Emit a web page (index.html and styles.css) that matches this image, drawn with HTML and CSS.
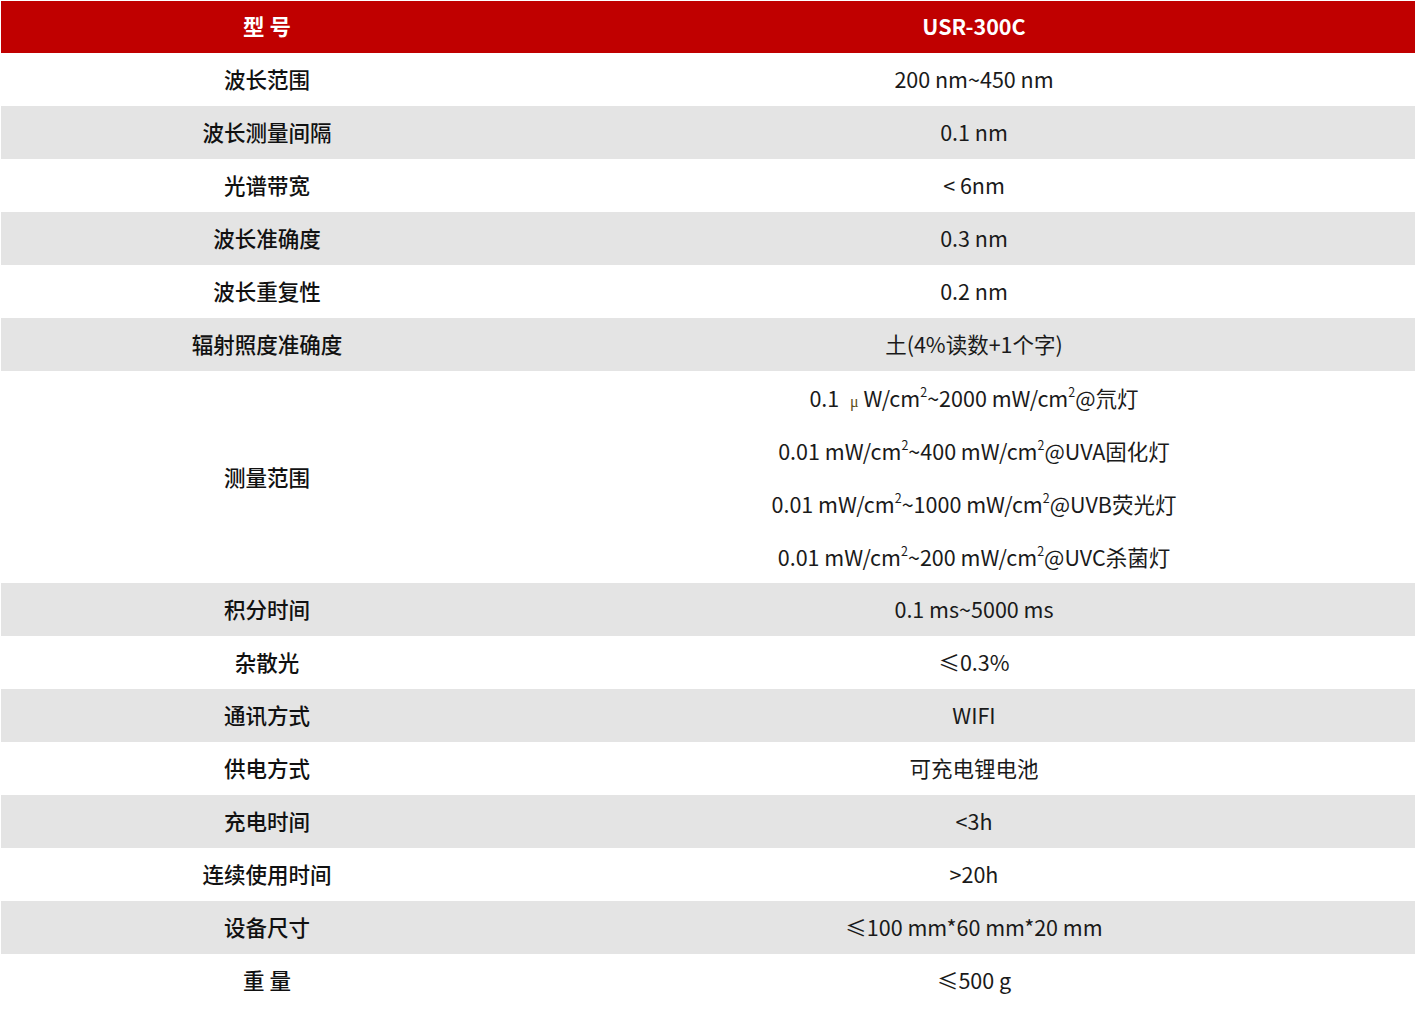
FILE: index.html
```html
<!DOCTYPE html>
<html lang="zh-CN">
<head>
<meta charset="utf-8">
<title>USR-300C</title>
<link rel="stylesheet" href="styles.css">
</head>
<body>
<table class="spec">
  <colgroup><col class="c-label"><col class="c-value"></colgroup>
  <thead>
    <tr class="head"><th>型&nbsp;号</th><th>USR-300C</th></tr>
  </thead>
  <tbody>
    <tr><td class="label">波长范围</td><td>200 nm~450 nm</td></tr>
    <tr class="alt"><td class="label">波长测量间隔</td><td>0.1 nm</td></tr>
    <tr><td class="label">光谱带宽</td><td>&lt; 6nm</td></tr>
    <tr class="alt"><td class="label">波长准确度</td><td>0.3 nm</td></tr>
    <tr><td class="label">波长重复性</td><td>0.2 nm</td></tr>
    <tr class="alt"><td class="label">辐射照度准确度</td><td>土(4%读数+1个字)</td></tr>
    <tr class="multi"><td class="label">测量范围</td><td>
      <div class="line">0.1 <span class="mu">μ</span> W/cm<sup>2</sup>~2000 mW/cm<sup>2</sup>@氘灯</div>
      <div class="line">0.01 mW/cm<sup>2</sup>~400 mW/cm<sup>2</sup>@UVA固化灯</div>
      <div class="line">0.01 mW/cm<sup>2</sup>~1000 mW/cm<sup>2</sup>@UVB荧光灯</div>
      <div class="line">0.01 mW/cm<sup>2</sup>~200 mW/cm<sup>2</sup>@UVC杀菌灯</div>
    </td></tr>
    <tr class="alt"><td class="label">积分时间</td><td>0.1 ms~5000 ms</td></tr>
    <tr><td class="label">杂散光</td><td>≤0.3%</td></tr>
    <tr class="alt"><td class="label">通讯方式</td><td>WIFI</td></tr>
    <tr><td class="label">供电方式</td><td>可充电锂电池</td></tr>
    <tr class="alt"><td class="label">充电时间</td><td>&lt;3h</td></tr>
    <tr><td class="label">连续使用时间</td><td>&gt;20h</td></tr>
    <tr class="alt"><td class="label">设备尺寸</td><td>≤100 mm*60 mm*20 mm</td></tr>
    <tr><td class="label">重&nbsp;量</td><td>≤500 g</td></tr>
  </tbody>
</table>
</body>
</html>
```

FILE: styles.css
```css
html, body {
  margin: 0;
  padding: 0;
  background: #ffffff;
}
body {
  padding: 1px;
  font-family: "Noto Sans CJK SC", "Noto Sans", sans-serif;
  color: #111111;
}
.spec {
  width: 1414px;
  border-collapse: collapse;
  table-layout: fixed;
}
.c-label { width: 532px; }
.c-value { width: 882px; }
.spec th, .spec td {
  padding: 0 0 2px;
  text-align: center;
  vertical-align: middle;
  font-size: 21.5px;
  line-height: 26px;
}
.head {
  background: #c00000;
  height: 52px;
}
.head th {
  color: #ffffff;
  font-weight: 700;
  font-size: 21.5px;
}
.spec tbody tr {
  height: 53px;
}
.spec tbody td {
  font-weight: 400;
  color: #1a1a1a;
}
.spec tbody td.label {
  font-weight: 500;
  color: #111111;
}
.alt {
  background: #e4e4e4;
}
.multi {
  height: 212px;
}
.spec tbody .multi td {
  padding: 0;
}
.line {
  height: 53px;
  line-height: 53px;
}
.line sup {
  font-size: 12.5px;
  line-height: 0;
  vertical-align: 10px;
}
.mu {
  font-family: "Liberation Serif", serif;
  font-size: 16px;
  color: #5e5020;
  margin-left: 6px;
}
```
